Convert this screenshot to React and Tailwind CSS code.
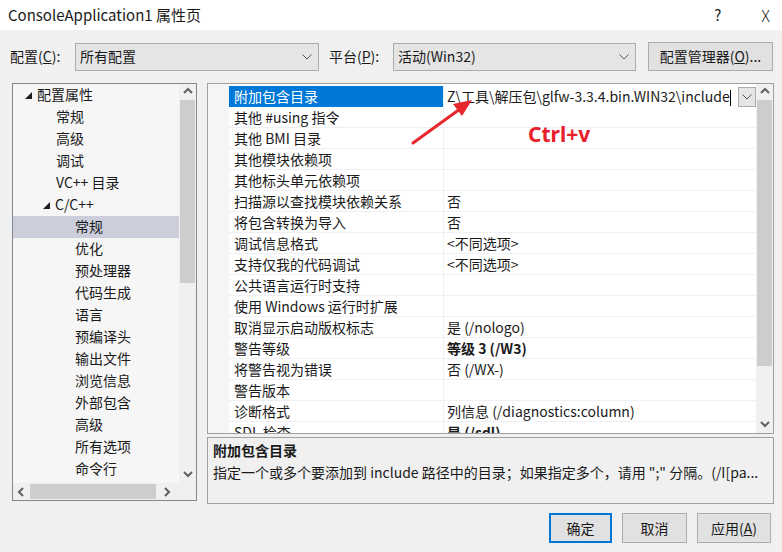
import React from 'react';

const rows = [
  { name: '附加包含目录', value: 'Z\\工具\\解压包\\glfw-3.3.4.bin.WIN32\\include', selected: true },
  { name: '其他 #using 指令', value: '' },
  { name: '其他 BMI 目录', value: '' },
  { name: '其他模块依赖项', value: '' },
  { name: '其他标头单元依赖项', value: '' },
  { name: '扫描源以查找模块依赖关系', value: '否' },
  { name: '将包含转换为导入', value: '否' },
  { name: '调试信息格式', value: '<不同选项>' },
  { name: '支持仅我的代码调试', value: '<不同选项>' },
  { name: '公共语言运行时支持', value: '' },
  { name: '使用 Windows 运行时扩展', value: '' },
  { name: '取消显示启动版权标志', value: '是 (/nologo)' },
  { name: '警告等级', value: '等级 3 (/W3)', bold: true },
  { name: '将警告视为错误', value: '否 (/WX-)' },
  { name: '警告版本', value: '' },
  { name: '诊断格式', value: '列信息 (/diagnostics:column)' },
  { name: 'SDL 检查', value: '是 (/sdl)', bold: true },
];

const tree = [
  { label: '配置属性', level: 0, open: true },
  { label: '常规', level: 1 },
  { label: '高级', level: 1 },
  { label: '调试', level: 1 },
  { label: 'VC++ 目录', level: 1 },
  { label: 'C/C++', level: 1, open: true },
  { label: '常规', level: 2, selected: true },
  { label: '优化', level: 2 },
  { label: '预处理器', level: 2 },
  { label: '代码生成', level: 2 },
  { label: '语言', level: 2 },
  { label: '预编译头', level: 2 },
  { label: '输出文件', level: 2 },
  { label: '浏览信息', level: 2 },
  { label: '外部包含', level: 2 },
  { label: '高级', level: 2 },
  { label: '所有选项', level: 2 },
  { label: '命令行', level: 2 },
];

const Chevron = ({ dir = 'down' }) => {
  const d = {
    down: 'M1 2 L5 6 L9 2',
    up: 'M1 6 L5 2 L9 6',
    left: 'M6 1 L2 5 L6 9',
    right: 'M2 1 L6 5 L2 9',
  }[dir];
  return (
    <svg width="10" height="10" viewBox="0 0 10 10">
      <path d={d} fill="none" stroke="#606060" strokeWidth="2" />
    </svg>
  );
};

const ThinChevron = () => (
  <svg width="10" height="6" viewBox="0 0 10 6">
    <path d="M0.5 0.5 L5 5 L9.5 0.5" fill="none" stroke="#555" strokeWidth="1" />
  </svg>
);

const Combo = ({ text, width }) => (
  <div className={`${width} h-[28px] bg-[#e5e5e5] border border-[#acacac] flex items-center justify-between pl-[4px] pr-[6px]`}>
    <span className="text-[14px]">{text}</span>
    <ThinChevron />
  </div>
);

const Triangle = () => (
  <svg width="7" height="7" viewBox="0 0 7 7">
    <path d="M7 0 L7 7 L0 7 Z" fill="#1e1e1e" />
  </svg>
);

export default function App() {
  return (
    <div className="relative w-[782px] h-[552px] bg-[#f0f0f0] text-[#1a1a1a] font-['Noto_Sans_CJK_SC','Noto_Sans',sans-serif] overflow-hidden">
      {/* title bar */}
      <div className="h-[30px] bg-white flex items-center pl-[8px] pr-[12px]">
        <span className="text-[15px] flex-1">ConsoleApplication1 属性页</span>
        <span className="text-[15px] mr-[40px]">?</span>
        <span className="text-[16px] font-light">X</span>
      </div>

      {/* config row */}
      <div className="flex items-center h-[29px] mt-[12px] pl-[10px]">
        <span className="text-[14px] w-[65px]">配置(<u>C</u>):</span>
        <Combo text="所有配置" width="w-[244px]" />
        <span className="text-[14px] ml-[10px] w-[64px]">平台(<u>P</u>):</span>
        <Combo text="活动(Win32)" width="w-[243px]" />
        <div className="ml-[12px] w-[125px] h-[29px] bg-[#e1e1e1] border border-[#adadad] flex items-center justify-center text-[14px]">
          配置管理器(<u>O</u>)...
        </div>
      </div>

      {/* main area */}
      <div className="flex mt-[12px] pl-[12px]">
        {/* tree */}
        <div className="w-[185px] h-[418px] border border-[#828790] flex flex-col">
          <div className="flex flex-1 min-h-0">
            <div className="flex-1 bg-[#f6f6f6] overflow-hidden">
              {tree.map((t, i) => (
                <div
                  key={i}
                  className={`h-[22px] flex items-center pb-[2px] text-[14px] ${t.selected ? 'bg-[#cccedb]' : ''}`}
                >
                  <div
                    className={`flex items-center ${t.level === 0 ? 'pl-[12px]' : t.level === 1 ? 'pl-[30px]' : 'pl-[62px]'}`}
                  >
                    {t.open ? (
                      <span className="w-[12px] flex items-center pt-[2px]"><Triangle /></span>
                    ) : t.level === 1 ? (
                      <span className="w-[13px]" />
                    ) : null}
                    <span>{t.label}</span>
                  </div>
                </div>
              ))}
            </div>
            <div className="w-[17px] bg-[#f0f0f0] flex flex-col items-center">
              <div className="h-[16px] flex items-center justify-center"><Chevron dir="up" /></div>
              <div className="w-[15px] h-[183px] bg-[#cdcdcd]" />
              <div className="flex-1" />
              <div className="h-[17px] flex items-center justify-center"><Chevron dir="down" /></div>
            </div>
          </div>
          <div className="h-[17px] flex bg-[#f0f0f0]">
            <div className="w-[17px] flex items-center justify-center"><Chevron dir="left" /></div>
            <div className="w-[126px] h-[15px] mt-[1px] bg-[#cdcdcd]" />
            <div className="flex-1 flex items-center justify-center"><Chevron dir="right" /></div>
            <div className="w-[17px]" />
          </div>
        </div>

        {/* right column */}
        <div className="ml-[10px] w-[567px] flex flex-col">
          <div className="h-[351px] border border-[#a0a0a0] flex bg-white">
            <div className="w-[21px] bg-[#f5f5f5]" />
            <div className="flex-1 overflow-hidden pt-[2px]">
              {rows.map((r, i) => (
                <div key={i} className="h-[21px] flex text-[14px]">
                  <div
                    className={`w-[215px] pl-[5px] flex items-center border-r border-[#f0f0f0] ${
                      r.selected ? 'bg-[#0078d7] text-white' : 'border-b border-b-[#eef0f4]'
                    }`}
                  >
                    {r.name}
                  </div>
                  <div
                    className={`flex-1 flex items-center pl-[3px] overflow-hidden whitespace-nowrap ${
                      r.selected ? '' : 'border-b border-[#eef0f4]'
                    } ${r.bold ? 'font-bold' : ''}`}
                  >
                    {r.selected ? (
                      <div className="flex items-center w-full">
                        <span className="flex-1 overflow-hidden whitespace-nowrap">
                          {r.value}
                          <span className="inline-block w-[1px] h-[16px] bg-black align-middle" />
                        </span>
                        <div className="w-[18px] h-[20px] bg-[#e5e5e5] border border-[#acacac] flex items-center justify-center">
                          <ThinChevron />
                        </div>
                      </div>
                    ) : (
                      r.value
                    )}
                  </div>
                </div>
              ))}
            </div>
            <div className="w-[17px] bg-[#f0f0f0] flex flex-col items-center">
              <div className="h-[16px] flex items-center justify-center"><Chevron dir="up" /></div>
              <div className="w-[15px] h-[266px] bg-[#cdcdcd]" />
              <div className="flex-1" />
              <div className="h-[17px] flex items-center justify-center"><Chevron dir="down" /></div>
            </div>
          </div>
          <div className="mt-[3px] h-[67px] border border-[#a0a0a0] pl-[5px] pt-[1px] text-[14px]">
            <div className="font-bold h-[22px] leading-[22px]">附加包含目录</div>
            <div className="h-[22px] leading-[22px] whitespace-nowrap overflow-hidden">
              指定一个或多个要添加到 include 路径中的目录；如果指定多个，请用 ";" 分隔。(/I[pa...
            </div>
          </div>
        </div>
      </div>

      {/* buttons */}
      <div className="flex justify-end mt-[9px] pr-[11px] gap-[10px] text-[14px]">
        <div className="w-[63px] h-[30px] bg-[#e1e1e1] border-2 border-[#0078d7] flex items-center justify-center">确定</div>
        <div className="w-[65px] h-[30px] bg-[#e1e1e1] border border-[#adadad] flex items-center justify-center">取消</div>
        <div className="w-[74px] h-[30px] bg-[#e1e1e1] border border-[#adadad] flex items-center justify-center">应用(<u>A</u>)</div>
      </div>

      {/* annotation */}
      <svg className="absolute left-0 top-0 pointer-events-none" width="782" height="552">
        <path d="M413 143 L460 109" stroke="#e8272c" strokeWidth="3" strokeLinecap="round" />
        <polygon points="472,100 462,116 453,104" fill="#e8272c" />
      </svg>
      <div className="absolute left-[528px] top-[119px] text-[21px] font-bold text-[#e8202a] font-['Noto_Sans',sans-serif]">
        Ctrl+v
      </div>
    </div>
  );
}
